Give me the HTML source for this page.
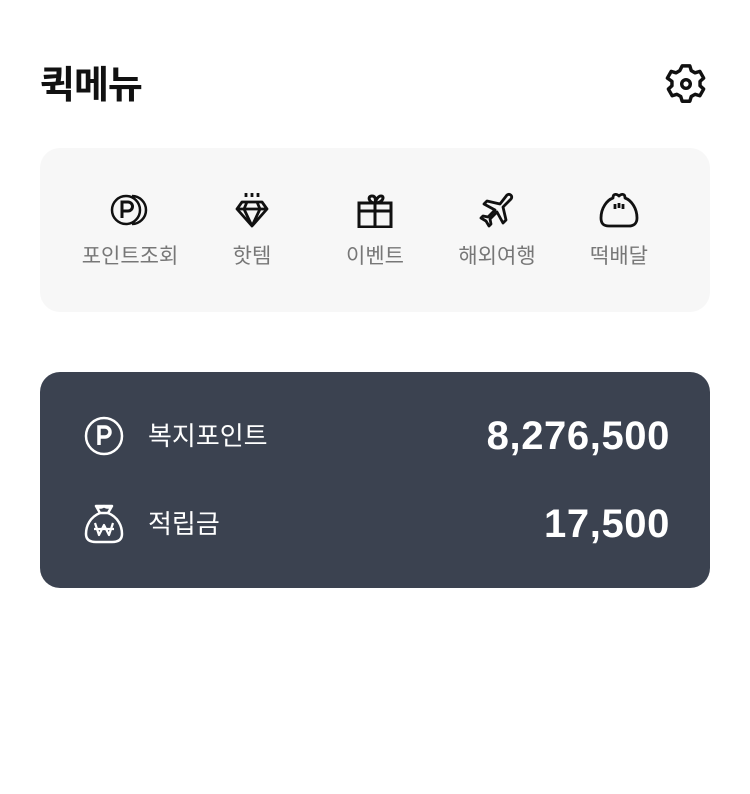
<!DOCTYPE html>
<html><head><meta charset="utf-8"><style>
body{margin:0;width:750px;height:794px;background:#fff;font-family:"Liberation Sans","Noto Sans CJK KR",sans-serif;position:relative;overflow:hidden}
.t{position:absolute;left:40px;top:54px;font-size:38px;font-weight:bold;color:#111;letter-spacing:-1px}
.gear{position:absolute;left:665px;top:63px}
.box{position:absolute;left:40px;top:148px;width:670px;height:164px;background:#f7f7f7;border-radius:20px}
.it{position:absolute;top:44px;width:120px;text-align:center;color:#777;font-size:21px}
.it svg{display:block;margin:0 auto 12px}
.card{position:absolute;left:40px;top:372px;width:670px;height:216px;background:#3b4250;border-radius:20px;color:#fff}
.lab{position:absolute;left:108px;font-size:26px}
.val{position:absolute;right:40px;font-size:40px;font-weight:bold;letter-spacing:0.6px}
</style></head><body>
<div class="t">퀵메뉴</div>
<svg class="gear" width="42" height="42" viewBox="0 0 44 44" fill="none" stroke="#111" stroke-width="3.6" stroke-linejoin="round"><path d="M18 3h8l1.5 5 4 2.3 5-1.5 4 7-3.8 3.5v4.5l3.8 3.5-4 7-5-1.5-4 2.3-1.5 5h-8l-1.5-5-4-2.3-5 1.5-4-7 3.8-3.5v-4.5L2.5 15.8l4-7 5 1.5 4-2.3z"/><circle cx="22" cy="22" r="4.5"/></svg>
<div class="box">
<div class="it" style="left:30px"><svg width="40" height="36" viewBox="0 0 40 36" fill="none" stroke="#111" stroke-width="2.5"><circle cx="16" cy="18" r="14"/><path d="M22 4a14 14 0 0 1 0 28"/><path d="M12 26V10h6a4.5 4.5 0 0 1 0 9h-6" stroke-width="3"/></svg>포인트조회</div>
<div class="it" style="left:152px"><svg width="40" height="36" viewBox="0 0 40 36" fill="none" stroke="#111" stroke-width="2.8" stroke-linejoin="round"><path d="M14 1v4M20 1v4M26 1v4"/><path d="M10 10h20l5 7-15 17L5 17z M5 17h30 M15 10l-3 7 8 17 8-17-3-7"/></svg>핫템</div>
<div class="it" style="left:275px"><svg width="40" height="36" viewBox="0 0 40 36" fill="none" stroke="#111" stroke-width="3"><rect x="4" y="11" width="32" height="24"/><path d="M4 19h32M20 11v24M20 11c-6 0-8-7-3-7s3 7 3 7c0 0 2-7 6-7s2 7-6 7"/></svg>이벤트</div>
<div class="it" style="left:397px"><svg width="40" height="36" viewBox="0 0 40 36" fill="none" stroke="#111" stroke-width="2.8" stroke-linejoin="round"><path d="M30 3c3-2 6 1 4 4l-8 8 3 13-3 3-6-11-7 7 1 5-2 2-3-5-5-3 2-2 5 1 7-7-11-6 3-3 13 3z"/></svg>해외여행</div>
<div class="it" style="left:519px"><svg width="40" height="36" viewBox="0 0 40 36" fill="none" stroke="#111" stroke-width="2.8" stroke-linejoin="round"><path d="M14 6c0-5 4-4 6-2 2-2 6-3 6 2 6 2 12 10 12 20 0 6-4 8-8 8H10c-5 0-8-2-8-8C2 16 8 8 14 6z"/><path d="M16 12v5M20 11v5M24 12v5"/></svg>떡배달</div>
</div>
<div class="card">
<svg style="position:absolute;left:44px;top:44px" width="40" height="40" viewBox="0 0 40 40" fill="none" stroke="#fff" stroke-width="2.5"><circle cx="20" cy="20" r="18"/><path d="M15 29V11h6a5 5 0 0 1 0 10h-6" stroke-width="3.5"/></svg>
<div class="lab" style="top:44px">복지포인트</div>
<div class="val" style="top:42px">8,276,500</div>
<svg style="position:absolute;left:44px;top:130px" width="40" height="42" viewBox="0 0 40 42" fill="none" stroke="#fff" stroke-width="2.5" stroke-linejoin="round"><path d="M12 4h16l-4 7h-8z M12 4c3 2 6 2 8 0 2 2 5 2 8 0"/><path d="M16 11C6 15 2 24 2 32c0 6 4 8 10 8h16c6 0 10-2 10-8 0-8-4-17-14-21"/><path d="M11 21l4 12 5-10 5 10 4-12M10 27h20" stroke-width="2.2"/></svg>
<div class="lab" style="top:132px">적립금</div>
<div class="val" style="top:130px">17,500</div>
</div>
</body></html>
